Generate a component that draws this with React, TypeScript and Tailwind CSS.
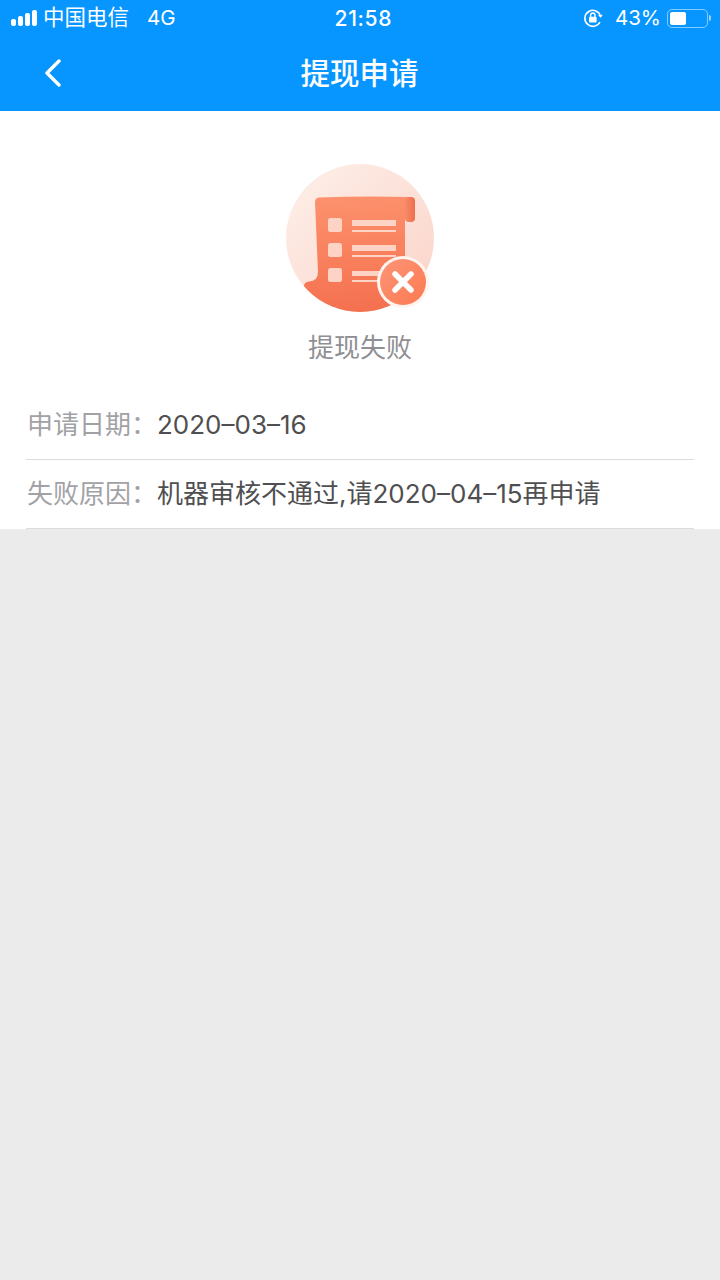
import React from 'react';

const font = { fontFamily: 'Inter, "Noto Sans CJK SC", sans-serif' };

function StatusBar() {
  return (
    <div className="relative flex h-[36px] items-center justify-between pl-[11px] pr-[9px] text-white">
      <div className="flex items-center">
        <div className="flex items-end gap-[2px]">
          <span className="h-[7px] w-[5px] rounded-[2px] bg-white" />
          <span className="h-[10px] w-[5px] rounded-[2px] bg-white" />
          <span className="h-[13px] w-[5px] rounded-[2px] bg-white" />
          <span className="h-[16px] w-[5px] rounded-[2px] bg-white" />
        </div>
        <span className="ml-[6px] text-[21.5px] leading-none">中国电信</span>
        <span className="ml-[18px] text-[20.5px] leading-none">4G</span>
      </div>
      <span className="absolute left-[334.5px] top-[7px] text-[21px] font-medium leading-[24px] tracking-[0.7px]">21:58</span>
      <div className="flex items-center">
        <svg width="20" height="20" viewBox="0 0 20 20" fill="none" className="mr-[12px]">
          <path d="M17.6 8.2A8 8 0 1 0 17 14" stroke="#fff" strokeWidth="1.6" />
          <path d="M15 7.2l2.8 2.6 2-3z" fill="#fff" />
          <rect x="6" y="8.8" width="7.6" height="5.8" rx="1" fill="#fff" />
          <path d="M7.6 9V7.2a2.2 2.2 0 0 1 4.4 0V9" stroke="#fff" strokeWidth="1.4" />
        </svg>
        <span className="text-[20.5px] leading-none">43%</span>
        <div className="ml-[6px] flex h-[19px] w-[41px] items-center rounded-[5px] border border-white/50 p-[2px]">
          <div className="h-full w-[16px] rounded-[2px] bg-white" />
        </div>
        <div className="ml-[1px] h-[6px] w-[2px] rounded-r bg-white/60" />
      </div>
    </div>
  );
}

function FailIcon() {
  return (
    <svg width="148" height="150" viewBox="0 0 148 150">
      <defs>
        <linearGradient id="bg" x1="0" y1="0" x2="1" y2="1">
          <stop offset="0" stopColor="#fdf0ea" />
          <stop offset="1" stopColor="#fbd3c8" />
        </linearGradient>
        <linearGradient id="paper" gradientUnits="userSpaceOnUse" x1="70" y1="33" x2="80" y2="148">
          <stop offset="0" stopColor="#fd916d" />
          <stop offset="1" stopColor="#f4704f" />
        </linearGradient>
        <linearGradient id="roll" x1="0" y1="0" x2="1" y2="0">
          <stop offset="0" stopColor="#f98b68" />
          <stop offset="1" stopColor="#ee6c4b" />
        </linearGradient>
        <linearGradient id="badge" x1="0" y1="0" x2="1" y2="1">
          <stop offset="0" stopColor="#fd9478" />
          <stop offset="1" stopColor="#fb7a50" />
        </linearGradient>
        <clipPath id="circle">
          <circle cx="74" cy="74" r="74" />
        </clipPath>
      </defs>
      <circle cx="74" cy="74" r="74" fill="url(#bg)" />
      <g clipPath="url(#circle)">
        {/* paper sheet, the foot curls out at lower left */}
        <path
          d="M33 33.5Q75 32 123 33Q119 35 119 40V148H18V122Q18 118 23 117.5Q32 117 32 108L29 38Q29 34 33 33.5Z"
          fill="url(#paper)"
        />
        <rect x="119" y="33" width="10" height="25" rx="4" fill="url(#roll)" />
        <rect x="42" y="54" width="14" height="14" rx="2.5" fill="#fdd3c5" />
        <rect x="42" y="79" width="14" height="14" rx="2.5" fill="#fdd3c5" />
        <rect x="42" y="104" width="14" height="14" rx="2.5" fill="#fdd3c5" />
        <rect x="66" y="56" width="44" height="6" fill="#fdd3c5" />
        <rect x="66" y="66" width="44" height="2" fill="#fdd3c5" />
        <rect x="66" y="81" width="44" height="6" fill="#fdd3c5" />
        <rect x="66" y="91" width="44" height="2" fill="#fdd3c5" />
        <rect x="66" y="107" width="44" height="5" fill="#fdd3c5" />
        <rect x="66" y="116" width="44" height="2" fill="#fdd3c5" />
      </g>
      <circle cx="117" cy="118" r="26" fill="#fff4ef" />
      <circle cx="117" cy="118" r="23" fill="url(#badge)" />
      <path d="M109 110l16 16M125 110l-16 16" stroke="#fff" strokeWidth="5.5" strokeLinecap="round" />
    </svg>
  );
}

function Row({ label, children }: { label: string; children: React.ReactNode }) {
  return (
    <div className="flex h-[69px] items-center border-b border-[#dcdcdc] text-[26px] leading-none">
      <span className="w-[131px] shrink-0 pl-[1px] text-[#a2a2a6]">{label}</span>
      <span className="text-[#4f4f51]">{children}</span>
    </div>
  );
}

export default function App() {
  return (
    <div className="flex min-h-[1280px] flex-col bg-[#ebebeb]" style={font}>
      <div className="bg-[#0795ff]">
        <StatusBar />
        <div className="relative flex h-[75px] items-center justify-center text-white">
          <svg width="20" height="28" viewBox="0 0 20 28" fill="none" className="absolute left-[43px] top-[23px]">
            <path d="M16 2L4 14l12 12" stroke="#fff" strokeWidth="3.4" strokeLinecap="round" strokeLinejoin="round" />
          </svg>
          <span className="pr-[1px] text-[29.5px] font-medium leading-none">提现申请</span>
        </div>
      </div>
      <div className="bg-white">
        <div className="flex flex-col items-center pt-[53px]">
          <div className="h-[150px]">
            <FailIcon />
          </div>
          <div className="mt-[19px] text-[26px] leading-[30px] text-[#8f8f93]">提现失败</div>
        </div>
        <div className="mx-[26px] mt-[28px]">
          <Row label="申请日期：">2020–03–16</Row>
          <Row label="失败原因：">机器审核不通过,请2020–04–15再申请</Row>
        </div>
      </div>
    </div>
  );
}
